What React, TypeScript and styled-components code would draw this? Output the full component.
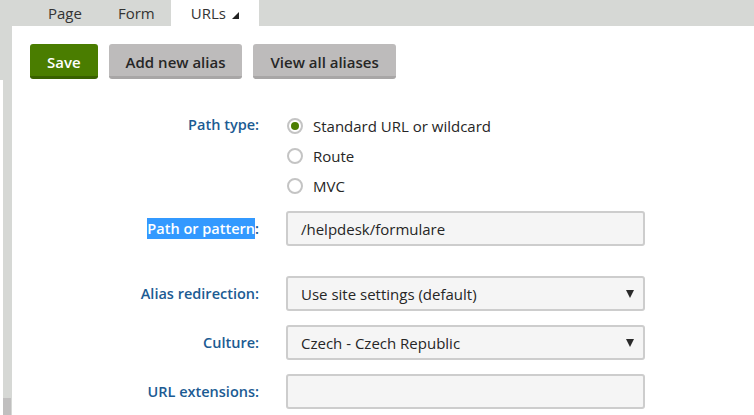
import React from "react";
import styled, { createGlobalStyle } from "styled-components";

const GlobalStyle = createGlobalStyle`
  html, body {
    margin: 0;
    padding: 0;
    background: #ffffff;
    font-family: "Open Sans", "Noto Sans", sans-serif;
  }
`;

const Page = styled.div`
  width: 754px;
  height: 415px;
  overflow: hidden;
  display: flex;
  flex-direction: column;
`;

const TabBar = styled.div`
  height: 26px;
  background: #d6d8d5;
  display: flex;
  padding-left: 30px;
  flex-shrink: 0;
`;

const Tab = styled.div<{ $active?: boolean }>`
  padding: 0 ${(p) => (p.$active ? "20px" : "18px")};
  height: 26px;
  display: flex;
  align-items: center;
  gap: 6px;
  font-size: 15px;
  color: #333333;
  background: ${(p) => (p.$active ? "#ffffff" : "transparent")};
  margin-left: ${(p) => (p.$active ? "-2px" : "0")};
`;

const Corner = styled.span`
  width: 0;
  height: 0;
  border-left: 7px solid transparent;
  border-bottom: 7px solid #222222;
  margin-top: 4px;
`;

const Main = styled.div`
  flex: 1;
  display: flex;
`;

const Gutter = styled.div`
  width: 12px;
  display: flex;
  flex-direction: column;
  flex-shrink: 0;
`;

const GutterTop = styled.div`
  height: 54px;
  background: #d6d8d5;
`;

const GutterTrack = styled.div`
  flex: 1;
  margin-left: 3px;
  background: #d6d8d5;
  display: flex;
  flex-direction: column;
  justify-content: flex-end;
`;

const Thumb = styled.div`
  height: 17px;
  width: 8px;
  background: #c0bfbf;
`;

const Content = styled.div`
  flex: 1;
  padding: 18px 0 0 18px;
`;

const Toolbar = styled.div`
  display: flex;
  gap: 11px;
`;

const Button = styled.button<{ $primary?: boolean }>`
  height: 35px;
  padding: 3px 17px 0;
  border: none;
  border-radius: 3px;
  border-bottom: 3px solid ${(p) => (p.$primary ? "#386000" : "#a8a6a6")};
  background: ${(p) => (p.$primary ? "#4a7d00" : "#bdbbbb")};
  color: ${(p) => (p.$primary ? "#ffffff" : "#262626")};
  font-family: "Open Sans", "Noto Sans", sans-serif;
  font-weight: 600;
  font-size: 15px;
`;

const Form = styled.div`
  display: grid;
  grid-template-columns: 229px 359px;
  column-gap: 27px;
  margin-top: 32px;
`;

const Label = styled.div<{ $top?: boolean }>`
  text-align: right;
  color: #1c5b93;
  font-weight: 600;
  font-size: 14.5px;
  display: flex;
  justify-content: flex-end;
  align-items: ${(p) => (p.$top ? "flex-start" : "center")};
  padding-top: ${(p) => (p.$top ? "4px" : "0")};
`;

const Selected = styled.span`
  background: #3399ff;
  color: #ffffff;
  padding: 1px 0;
`;

const Radios = styled.div`
  display: flex;
  flex-direction: column;
`;

const RadioRow = styled.div`
  height: 30px;
  display: flex;
  align-items: center;
  gap: 10px;
  font-size: 15px;
  color: #262626;
  padding-left: 1px;
`;

const RadioCircle = styled.span<{ $checked?: boolean }>`
  width: 16px;
  height: 16px;
  box-sizing: border-box;
  border-radius: 50%;
  border: 2px solid #c4c4c4;
  background: #ffffff;
  display: flex;
  align-items: center;
  justify-content: center;
  &::after {
    content: "";
    width: 8px;
    height: 8px;
    border-radius: 50%;
    background: ${(p) => (p.$checked ? "#4a7d00" : "transparent")};
  }
`;

const Field = styled.div<{ $select?: boolean }>`
  height: 35px;
  box-sizing: border-box;
  border: 2px solid #cdcdcd;
  border-radius: 3px;
  background: #f5f5f5;
  display: flex;
  align-items: center;
  justify-content: space-between;
  padding: 0 9px 0 13px;
  font-size: 15px;
  color: #262626;
`;

const Arrow = styled.span`
  width: 0;
  height: 0;
  border-left: 4px solid transparent;
  border-right: 4px solid transparent;
  border-top: 8px solid #2a2a2a;
`;

const Spacer = styled.div<{ $h: number }>`
  grid-column: 1 / span 2;
  height: ${(p) => p.$h}px;
`;

export default function App() {
  return (
    <Page>
      <GlobalStyle />
      <TabBar>
        <Tab>Page</Tab>
        <Tab>Form</Tab>
        <Tab $active>
          URLs <Corner />
        </Tab>
      </TabBar>
      <Main>
        <Gutter>
          <GutterTop />
          <GutterTrack>
            <Thumb />
          </GutterTrack>
        </Gutter>
        <Content>
          <Toolbar>
            <Button $primary>Save</Button>
            <Button>Add new alias</Button>
            <Button>View all aliases</Button>
          </Toolbar>
          <Form>
            <Label $top>Path type:</Label>
            <Radios>
              <RadioRow>
                <RadioCircle $checked />
                Standard URL or wildcard
              </RadioRow>
              <RadioRow>
                <RadioCircle />
                Route
              </RadioRow>
              <RadioRow>
                <RadioCircle />
                MVC
              </RadioRow>
            </Radios>
            <Spacer $h={10} />
            <Label>
              <Selected>Path or pattern</Selected>:
            </Label>
            <Field>/helpdesk/formulare</Field>
            <Spacer $h={30} />
            <Label>Alias redirection:</Label>
            <Field $select>
              Use site settings (default)
              <Arrow />
            </Field>
            <Spacer $h={14} />
            <Label>Culture:</Label>
            <Field $select>
              Czech - Czech Republic
              <Arrow />
            </Field>
            <Spacer $h={14} />
            <Label>URL extensions:</Label>
            <Field />
          </Form>
        </Content>
      </Main>
    </Page>
  );
}
